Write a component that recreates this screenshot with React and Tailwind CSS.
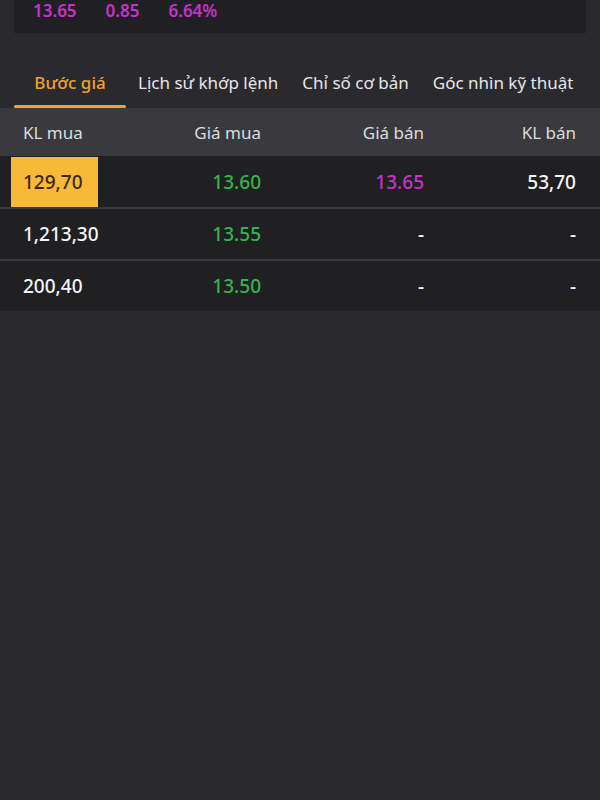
import React from "react";

const rows = [
  { klMua: "129,70", giaMua: "13.60", giaBan: "13.65", klBan: "53,70", hl: true },
  { klMua: "1,213,30", giaMua: "13.55", giaBan: "-", klBan: "-" },
  { klMua: "200,40", giaMua: "13.50", giaBan: "-", klBan: "-" },
];

export default function App() {
  return (
    <div
      className="w-[600px] h-[800px] bg-[#29292e] overflow-hidden"
      style={{ fontFamily: '"Noto Sans", "Open Sans", sans-serif' }}
    >
      {/* top card */}
      <div className="mx-[14px] h-[33px] bg-[#202024] flex items-start">
        <div className="flex text-[17px] leading-[22px] font-semibold text-[#c533c8]">
          <span className="ml-[19px]">13.65</span>
          <span className="ml-[29px]">0.85</span>
          <span className="ml-[29px]">6.64%</span>
        </div>
      </div>

      {/* tabs */}
      <div className="mt-[27px] h-[48px] flex items-stretch text-[17px] text-[#e6e6e6]">
        <div className="ml-[14px] w-[112px] flex flex-col">
          <div className="flex-1 flex items-center justify-center pt-px text-[#f2a22e] font-medium">Bước giá</div>
          <div className="h-[3px] bg-[#f2a22e] rounded-full" />
        </div>
        <div className="px-3 flex items-center pt-px pb-[3px]">Lịch sử khớp lệnh</div>
        <div className="px-3 flex items-center pt-px pb-[3px]">Chỉ số cơ bản</div>
        <div className="px-3 flex items-center pt-px pb-[3px]">Góc nhìn kỹ thuật</div>
      </div>

      {/* header */}
      <div className="h-[48px] bg-[#3a3a3e] flex items-center pt-px text-[17px] text-[#dcdcdc]">
        <div className="w-[98px] pl-[23px]">KL mua</div>
        <div className="w-[163px] text-right">Giá mua</div>
        <div className="w-[163px] text-right">Giá bán</div>
        <div className="w-[152px] text-right">KL bán</div>
      </div>

      {/* rows */}
      <div className="bg-[#202023] pt-px">
        {rows.map((r, i) => (
          <div
            key={i}
            className={`flex items-center text-[19px] font-medium ${i > 0 ? "h-[52px] border-t-2 border-[#38383c]" : "h-[50px]"}`}
          >
            <div className="w-[98px] pl-[11px] h-full flex items-center">
              {r.hl ? (
                <div className="w-[87px] h-full bg-[#f9b838] flex items-center pl-[12px] text-[#3a2810]">
                  {r.klMua}
                </div>
              ) : (
                <div className="pl-[12px] text-[#f4f4f4]">{r.klMua}</div>
              )}
            </div>
            <div className="w-[163px] text-right text-[#38b24c]">{r.giaMua}</div>
            <div className={`w-[163px] text-right ${r.giaBan === "-" ? "text-[#f4f4f4]" : "text-[#c533c8]"}`}>
              {r.giaBan}
            </div>
            <div className="w-[152px] text-right text-[#f4f4f4]">{r.klBan}</div>
          </div>
        ))}
      </div>
    </div>
  );
}
